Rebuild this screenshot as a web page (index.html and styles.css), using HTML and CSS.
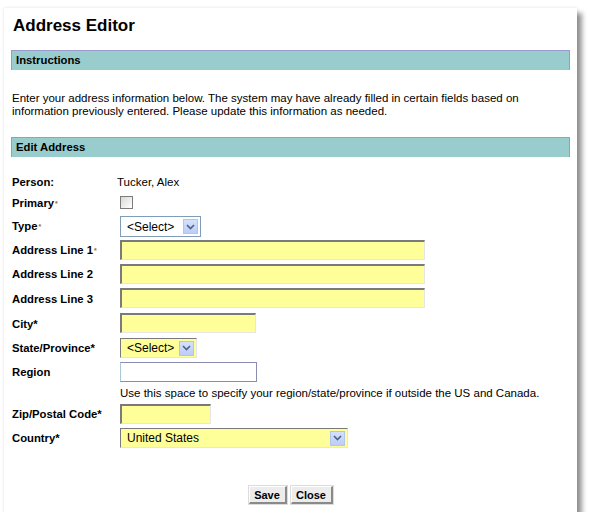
FILE: index.html
```html
<!DOCTYPE html>
<html lang="en">
<head>
<meta charset="utf-8">
<title>Address Editor</title>
<link rel="stylesheet" href="styles.css">
</head>
<body>
<div class="window">
  <h1 class="title">Address Editor</h1>
  <div class="bar">Instructions</div>
  <p class="intro">Enter your address information below. The system may have already filled in certain fields based on<br>information previously entered. Please update this information as needed.</p>
  <div class="bar bar-edit">Edit Address</div>
  <div class="form">
    <div class="label">Person:</div>
    <div class="value person">Tucker, Alex</div>

    <div class="label">Primary<sup class="req">*</sup></div>
    <div class="value"><span class="checkbox"></span></div>

    <div class="label">Type<sup class="req">*</sup></div>
    <div class="value"><span class="select select-type"><span class="select-text">&lt;Select&gt;</span><span class="arrow"><svg width="9" height="6" viewBox="0 0 9 6"><path d="M1 1 L4.5 4.5 L8 1" fill="none" stroke="#4d6185" stroke-width="1.6"/></svg></span></span></div>

    <div class="label">Address Line 1<sup class="req">*</sup></div>
    <div class="value"><span class="input input-long"></span></div>

    <div class="label">Address Line 2</div>
    <div class="value"><span class="input input-long"></span></div>

    <div class="label">Address Line 3</div>
    <div class="value"><span class="input input-long"></span></div>

    <div class="label">City*</div>
    <div class="value"><span class="input input-city"></span></div>

    <div class="label">State/Province*</div>
    <div class="value"><span class="select select-yellow select-state"><span class="select-text">&lt;Select&gt;</span><span class="arrow"><svg width="9" height="6" viewBox="0 0 9 6"><path d="M1 1 L4.5 4.5 L8 1" fill="none" stroke="#4d6185" stroke-width="1.6"/></svg></span></span></div>

    <div class="label">Region</div>
    <div class="value"><span class="input-plain"></span></div>

    <div class="label"></div>
    <div class="value help">Use this space to specify your region/state/province if outside the US and Canada.</div>

    <div class="label">Zip/Postal Code*</div>
    <div class="value"><span class="input input-zip"></span></div>

    <div class="label">Country*</div>
    <div class="value"><span class="select select-yellow select-country"><span class="select-text">United States</span><span class="arrow"><svg width="9" height="6" viewBox="0 0 9 6"><path d="M1 1 L4.5 4.5 L8 1" fill="none" stroke="#4d6185" stroke-width="1.6"/></svg></span></span></div>
  </div>
  <div class="actions">
    <button class="btn btn-save" type="button">Save</button>
    <button class="btn btn-close" type="button">Close</button>
  </div>
</div>
</body>
</html>
```

FILE: styles.css
```css
html, body {
  margin: 0;
  padding: 0;
  background: #ffffff;
}

body {
  font-family: "Liberation Sans", Arial, sans-serif;
  font-size: 11.5px;
  color: #000;
}

.window {
  margin: 8px 0 0 4px;
  width: 559px;
  height: 496px;
  padding: 8px 7px 0;
  background: #fff;
  box-shadow: 5px 5px 5px rgba(0, 0, 0, 0.42), 0 0 3px rgba(0, 0, 0, 0.12);
}

.title {
  margin: 0;
  padding-left: 2px;
  font-size: 17px;
  line-height: 20px;
  font-weight: bold;
}

.bar {
  margin-top: 14px;
  height: 19px;
  line-height: 19px;
  padding-left: 4px;
  background: #99cccc;
  border: 1px solid #9a9acc;
  border-bottom: none;
  font-weight: bold;
  font-size: 11.3px;
}

.bar-edit {
  margin-top: 19px;
}

.intro {
  margin: 22px 0 0;
  padding-left: 1px;
  line-height: 13px;
}

.form {
  margin-top: 17px;
  padding-left: 1px;
  display: grid;
  grid-template-columns: 108px 1fr;
  grid-template-rows: 16px 18px 20px 20px 20px 21px 21px 20px 20px 14px 20px 20px;
  row-gap: 4px;
}

.label {
  font-weight: bold;
  font-size: 11.3px;
  display: flex;
  align-items: center;
  white-space: nowrap;
}

.req {
  font-size: 7px;
  color: #8a6a3a;
  vertical-align: top;
  line-height: 7px;
  margin-left: 1px;
  position: relative;
  top: 0;
}

.value {
  display: flex;
  align-items: flex-start;
}

.person {
  align-items: center;
  margin-left: -3px;
}

.help {
  align-items: center;
}

.checkbox {
  margin-top: 2px;
  width: 11px;
  height: 11px;
  border: 1px solid #7c7c7c;
  background: linear-gradient(135deg, #d8d8d4 0%, #f4f4f2 70%, #ffffff 100%);
}

.input {
  box-sizing: border-box;
  height: 20px;
  background: #ffff99;
  border-style: solid;
  border-width: 2px 1px 1px 2px;
  border-color: #7a7a7a #e6e6e6 #e6e6e6 #7a7a7a;
}

.input-long { width: 305px; }
.input-city { width: 136px; }
.input-zip { width: 91px; }

.input-plain {
  box-sizing: border-box;
  width: 137px;
  height: 20px;
  background: #fff;
  border: 1px solid #8c8cb0;
  border-left-color: #a8c8d8;
}

.select {
  box-sizing: border-box;
  height: 21px;
  display: flex;
  align-items: center;
  justify-content: space-between;
  background: #fff;
  border: 1px solid #7f9db9;
  font-size: 12px;
  padding: 0 2px 0 6px;
}

.select-text {
  white-space: nowrap;
}

.select-type { width: 81px; }

.select-yellow {
  height: 20px;
  background: #ffff99;
  border-style: solid;
  border-width: 1px;
  border-color: #7a7a7a #e6e6e6 #e6e6e6 #7a7a7a;
}

.select-state { width: 77px; }
.select-country { width: 228px; }

.arrow {
  box-sizing: border-box;
  width: 15px;
  height: 15px;
  display: flex;
  align-items: center;
  justify-content: center;
  background: linear-gradient(180deg, #d4e0fc 0%, #bccdf8 100%);
  border: 1px solid #b3c4ee;
}

.actions {
  margin-top: 38px;
  display: flex;
  justify-content: center;
  gap: 4px;
}

.btn {
  box-sizing: border-box;
  height: 18px;
  padding: 0;
  font-family: "Liberation Sans", Arial, sans-serif;
  font-size: 11px;
  font-weight: bold;
  color: #000;
  background: #ececec;
  border-style: solid;
  border-width: 1px 2px 2px 1px;
  border-color: #ffffff #8a8a8a #8a8a8a #ffffff;
  box-shadow: 0 0 0 1px #dcdcdc;
}

.btn-save { width: 38px; }
.btn-close { width: 42px; }
```
